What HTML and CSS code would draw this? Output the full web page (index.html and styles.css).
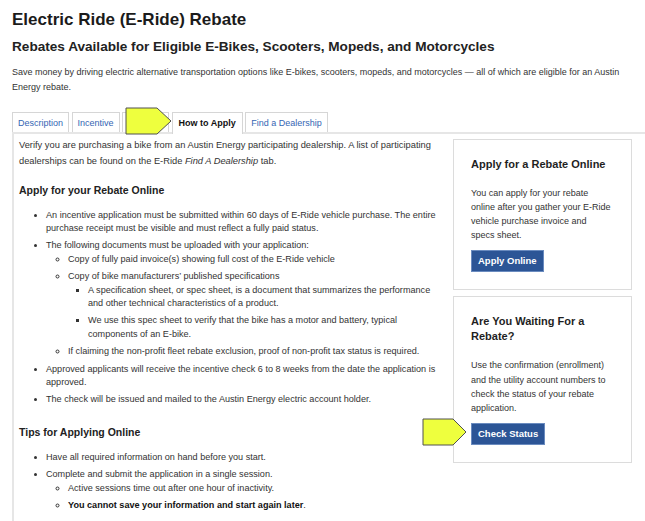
FILE: index.html
```html
<!DOCTYPE html>
<html lang="en">
<head>
<meta charset="utf-8">
<title>Electric Ride (E-Ride) Rebate</title>
<link rel="stylesheet" href="styles.css">
</head>
<body>
<div class="page">
  <h1 class="title">Electric Ride (E-Ride) Rebate</h1>
  <h2 class="subtitle">Rebates Available for Eligible E-Bikes, Scooters, Mopeds, and Motorcycles</h2>
  <p class="intro">Save money by driving electric alternative transportation options like E-bikes, scooters, mopeds, and motorcycles — all of which are eligible for an Austin Energy rebate.</p>

  <div class="tabs">
    <ul class="tab-list">
      <li class="tab">Description</li>
      <li class="tab">Incentive</li>
      <li class="tab">Eligibility</li>
      <li class="tab tab-active">How to Apply</li>
      <li class="tab">Find a Dealership</li>
    </ul>
    <div class="panel">
      <div class="main">
        <p class="lead">Verify you are purchasing a bike from an Austin Energy participating dealership. A list of participating dealerships can be found on the E-Ride <em>Find A Dealership</em> tab.</p>

        <h3 class="section-title">Apply for your Rebate Online</h3>
        <ul class="list">
          <li>An incentive application must be submitted within 60 days of E-Ride vehicle purchase. The entire purchase receipt must be visible and must reflect a fully paid status.</li>
          <li>The following documents must be uploaded with your application:
            <ul>
              <li>Copy of fully paid invoice(s) showing full cost of the E-Ride vehicle</li>
              <li>Copy of bike manufacturers’ published specifications
                <ul>
                  <li>A specification sheet, or spec sheet, is a document that summarizes the performance and other technical characteristics of a product.</li>
                  <li>We use this spec sheet to verify that the bike has a motor and battery, typical components of an E-bike.</li>
                </ul>
              </li>
              <li>If claiming the non-profit fleet rebate exclusion, proof of non-profit tax status is required.</li>
            </ul>
          </li>
          <li>Approved applicants will receive the incentive check 6 to 8 weeks from the date the application is approved.</li>
          <li>The check will be issued and mailed to the Austin Energy electric account holder.</li>
        </ul>

        <h3 class="section-title">Tips for Applying Online</h3>
        <ul class="list">
          <li>Have all required information on hand before you start.</li>
          <li>Complete and submit the application in a single session.
            <ul>
              <li>Active sessions time out after one hour of inactivity.</li>
              <li><strong>You cannot save your information and start again later</strong>.</li>
            </ul>
          </li>
        </ul>
      </div>

      <aside class="side">
        <div class="card">
          <h4 class="card-title">Apply for a Rebate Online</h4>
          <p class="card-text">You can apply for your rebate online after you gather your E-Ride vehicle purchase invoice and specs sheet.</p>
          <a class="btn">Apply Online</a>
        </div>
        <div class="card">
          <h4 class="card-title">Are You Waiting For a Rebate?</h4>
          <p class="card-text">Use the confirmation (enrollment) and the utility account numbers to check the status of your rebate application.</p>
          <a class="btn">Check Status</a>
        </div>
      </aside>
    </div>
  </div>

  <svg class="callout callout-tab" width="50" height="30" viewBox="0 0 50 30"><polygon points="2,2 33,2 47,15 33,28 2,28"/></svg>
  <svg class="callout callout-status" width="48" height="30" viewBox="0 0 48 30"><polygon points="2,2 32,2 45,15 32,28 2,28"/></svg>
</div>
</body>
</html>
```

FILE: styles.css
```css
html, body {
  margin: 0;
  padding: 0;
  background: #fff;
}

body {
  font-family: "Liberation Sans", Arial, Helvetica, sans-serif;
  color: #333;
  overflow: hidden;
}

.page {
  position: relative;
  padding: 10px 0 0 12px;
  height: 521px;
  box-sizing: border-box;
}

.title {
  font-size: 17px;
  line-height: 20px;
  margin: 0;
  color: #1b1b1b;
  font-weight: bold;
}

.subtitle {
  font-size: 13.6px;
  line-height: 17px;
  margin: 7.5px 0 0;
  color: #222;
  font-weight: bold;
}

.intro {
  font-size: 9px;
  line-height: 15.5px;
  margin: 10px 0 0;
}

.tabs {
  margin-top: 16px;
}

.tab-list {
  display: flex;
  gap: 2.5px;
  list-style: none;
  margin: 0;
  padding: 0;
  border-bottom: 2px solid #e6e6e6;
}

.tab {
  font-size: 9px;
  line-height: 18px;
  padding: 1px 5px 0;
  border: 1px solid #d6d6d6;
  border-bottom: 0;
  color: #3566b4;
  background: #fff;
}

.tab-active {
  font-weight: bold;
  color: #111;
  padding: 1px 6px 2px;
  margin-bottom: -2px;
}

.panel {
  display: flex;
  border-left: 2px solid #e6e6e6;
}

.main {
  flex: 1;
  min-width: 0;
  padding: 3px 0 0 5px;
}

.lead {
  margin: 0;
  font-size: 9.3px;
  line-height: 16px;
}

.section-title {
  font-size: 10.5px;
  line-height: 14px;
  margin: 14px 0 12px;
  color: #222;
  font-weight: bold;
}

.list {
  margin: 0 0 18px;
  padding-left: 27px;
  font-size: 9.1px;
  line-height: 13.4px;
  list-style: disc;
}

.list li {
  margin-bottom: 4px;
}

.list ul {
  margin: 0;
  padding-left: 22px;
  list-style: circle;
}

.list ul ul {
  padding-left: 20px;
  list-style: square;
}

.list strong {
  color: #111;
}

.side {
  flex: none;
  width: 179px;
  margin: 5px 13px 0 13px;
}

.card {
  border: 1px solid #dcdcdc;
  padding: 17px 19px 17px 17px;
  margin-bottom: 6px;
}

.card-title {
  font-size: 11px;
  line-height: 15px;
  margin: 0 0 14px;
  color: #1f1f1f;
  font-weight: bold;
}

.card-text {
  font-size: 9px;
  line-height: 14.2px;
  margin: 0 0 8px;
}

.btn {
  display: inline-block;
  background: #2c5596;
  color: #fff;
  font-weight: bold;
  font-size: 9.5px;
  line-height: 20px;
  padding: 0 6px;
  border: 1px solid #6a8bbf;
}

.callout {
  position: absolute;
  fill: #eeff3e;
  stroke: #505050;
  stroke-width: 1;
}

.callout-tab {
  left: 124px;
  top: 106px;
}

.callout-status {
  left: 421px;
  top: 417px;
}
```
